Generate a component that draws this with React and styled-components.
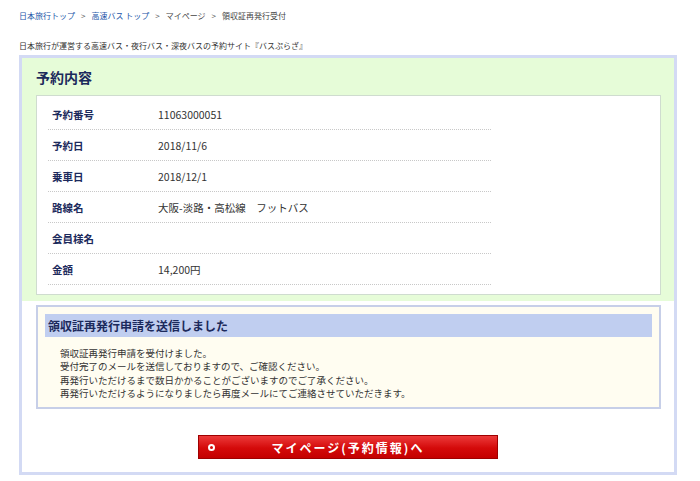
import React from 'react';
import styled, { createGlobalStyle } from 'styled-components';

const GlobalStyle = createGlobalStyle`
  html, body {
    margin: 0;
    padding: 0;
    background: #fff;
  }
  body {
    font-family: "Noto Sans CJK JP", "Noto Sans", sans-serif;
    color: #333;
  }
`;

const Page = styled.div`
  width: 700px;
  padding: 11px 0 0 19px;
  box-sizing: border-box;
`;

const Breadcrumb = styled.div`
  display: flex;
  align-items: center;
  font-size: 8px;
  line-height: 10px;
  color: #444;
`;

const Crumb = styled.span`
  color: ${(p) => (p.$link ? '#2356a8' : '#444')};
`;

const Sep = styled.span`
  margin: 0 6px;
  color: #555;
`;

const Lead = styled.p`
  margin: 20px 0 4px;
  font-size: 8px;
  line-height: 10px;
  color: #333;
`;

const Frame = styled.div`
  width: 658px;
  box-sizing: border-box;
  border: 3px solid #d3daf4;
  padding-bottom: 13px;
`;

const GreenSection = styled.section`
  background: #e6fcd8;
  padding: 9px 13px 6px 14px;
`;

const SectionTitle = styled.h2`
  margin: 0 0 8px;
  font-size: 14px;
  line-height: 20px;
  font-weight: bold;
  color: #1c2a5c;
`;

const InfoPanel = styled.div`
  background: #fff;
  border: 1px solid #cfdccf;
  padding: 3px 11px 9px;
`;

const Row = styled.div`
  display: flex;
  align-items: center;
  width: 443px;
  height: 31px;
  border-bottom: 1px dotted #c8c8c8;
  box-sizing: border-box;
  padding-left: 4px;
  font-size: 10.5px;
`;

const Label = styled.div`
  width: 106px;
  flex-shrink: 0;
  font-weight: bold;
  color: #1c2a5c;
`;

const Value = styled.div`
  color: #333;
`;

const Notice = styled.div`
  margin: 4px 13px 0 14px;
  background: #fffdf1;
  border: 2px solid #c7cfe8;
  padding: 7px;
`;

const NoticeHead = styled.h3`
  margin: 0;
  background: #c0cef0;
  height: 23px;
  display: flex;
  align-items: center;
  padding-left: 3px;
  font-size: 12px;
  font-weight: bold;
  color: #1c2a5c;
`;

const NoticeBody = styled.p`
  margin: 0;
  padding: 10px 0 0 15px;
  font-size: 9.5px;
  line-height: 13.3px;
  color: #333;
`;

const ButtonWrap = styled.div`
  display: flex;
  justify-content: center;
  padding-top: 26px;
`;

const RedButton = styled.a`
  position: relative;
  width: 300px;
  height: 24px;
  box-sizing: border-box;
  display: flex;
  align-items: center;
  justify-content: center;
  background: linear-gradient(#ec3a3a, #d40a0a 55%, #c40000);
  border: 1px solid #9e0000;
  color: #fff;
  font-size: 12px;
  font-weight: bold;
  letter-spacing: 2px;
  text-decoration: none;
`;

const Dot = styled.span`
  position: absolute;
  left: 9px;
  top: 50%;
  width: 3px;
  height: 3px;
  margin-top: -3.5px;
  border-radius: 50%;
  border: 2px solid #fff;
  background: #d40a0a;
`;

const rows = [
  ['予約番号', '11063000051'],
  ['予約日', '2018/11/6'],
  ['乗車日', '2018/12/1'],
  ['路線名', '大阪-淡路・高松線　フットバス'],
  ['会員様名', ''],
  ['金額', '14,200円'],
];

const App = () => {
  return (
    <Page>
      <GlobalStyle />
      <Breadcrumb>
        <Crumb $link>日本旅行トップ</Crumb>
        <Sep>&gt;</Sep>
        <Crumb $link>高速バス トップ</Crumb>
        <Sep>&gt;</Sep>
        <Crumb>マイページ</Crumb>
        <Sep>&gt;</Sep>
        <Crumb>領収証再発行受付</Crumb>
      </Breadcrumb>
      <Lead>日本旅行が運営する高速バス・夜行バス・深夜バスの予約サイト『バスぷらざ』</Lead>
      <Frame>
        <GreenSection>
          <SectionTitle>予約内容</SectionTitle>
          <InfoPanel>
            {rows.map(([k, v]) => (
              <Row key={k}>
                <Label>{k}</Label>
                <Value>{v}</Value>
              </Row>
            ))}
          </InfoPanel>
        </GreenSection>
        <Notice>
          <NoticeHead>領収証再発行申請を送信しました</NoticeHead>
          <NoticeBody>
            領収証再発行申請を受付けました。<br />
            受付完了のメールを送信しておりますので、ご確認ください。<br />
            再発行いただけるまで数日かかることがございますのでご了承ください。<br />
            再発行いただけるようになりましたら再度メールにてご連絡させていただきます。
          </NoticeBody>
        </Notice>
        <ButtonWrap>
          <RedButton href="#">
            <Dot />
            マイページ(予約情報)へ
          </RedButton>
        </ButtonWrap>
      </Frame>
    </Page>
  );
};

export default App;
